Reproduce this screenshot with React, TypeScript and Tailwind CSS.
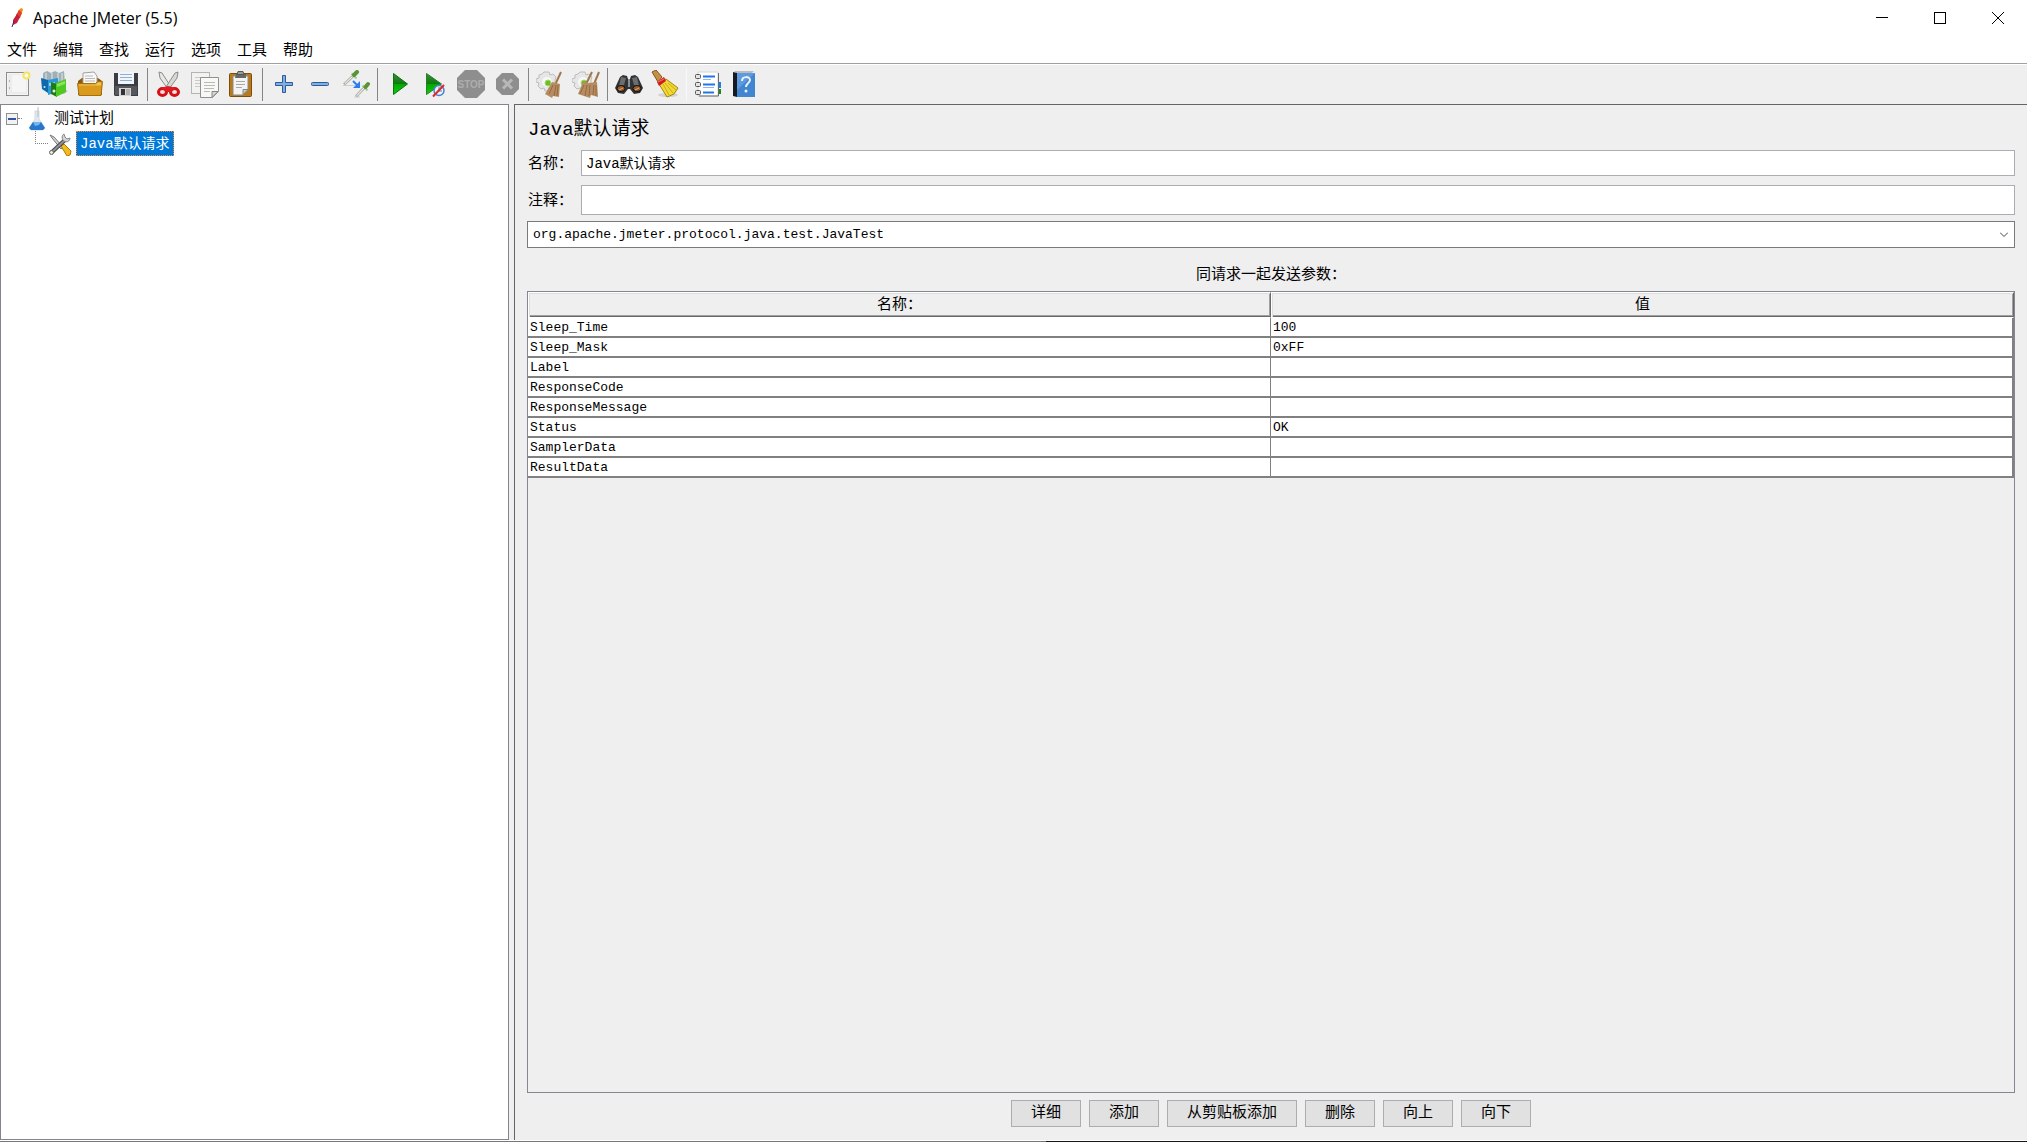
import { useState } from "react";
import type { ReactNode } from "react";

const menus = ["文件", "编辑", "查找", "运行", "选项", "工具", "帮助"];

const params = [
  { name: "Sleep_Time", value: "100" },
  { name: "Sleep_Mask", value: "0xFF" },
  { name: "Label", value: "" },
  { name: "ResponseCode", value: "" },
  { name: "ResponseMessage", value: "" },
  { name: "Status", value: "OK" },
  { name: "SamplerData", value: "" },
  { name: "ResultData", value: "" },
];

const actions = ["详细", "添加", "从剪贴板添加", "删除", "向上", "向下"];

function Icon({ children }: { children: ReactNode }) {
  return (
    <svg viewBox="0 0 28 28" className="h-7 w-7" fill="none" aria-hidden="true">
      {children}
    </svg>
  );
}

function NewIcon() {
  return (
    <Icon>
      <rect x="2.5" y="2.5" width="22" height="23" fill="#f4f4f4" stroke="#8c8f88" />
      <rect x="4" y="4" width="19" height="20" fill="#ececec" />
      <path d="M8 5h14v17H8z" fill="#f5f5f5" />
      <path d="M5.5 10v2M5.5 17v2" stroke="#b5b5b5" />
      <circle cx="22.5" cy="5.5" r="3" fill="#fffbe0" stroke="#f2e36a" strokeWidth="2" />
    </Icon>
  );
}

function TemplatesIcon() {
  return (
    <Icon>
      <path d="M9 24h15l4-3-5-3z" fill="#c4c4c4" />
      <path d="M3 3l4-2 4 2 4-2 4 2 5-2 1 12H3z" fill="#9fb0b6" />
      <path d="M6 3v7M12 3v8M18 3v8M22 3v8" stroke="#dfe8ea" />
      <path d="M1 8l7 2v13l-6-4z" fill="#0d69ad" />
      <path d="M8 10l10-2v14L8 25z" fill="#2a96db" />
      <path d="M9 13l6-1v3l-6 1z" fill="#8fd0f6" />
      <path d="M11 12l6 2v13l-6-3z" fill="#1e7c12" />
      <path d="M16 13l10-4v13l-10 5z" fill="#4fc822" />
      <path d="M17 14l8-3v3l-8 3z" fill="#86e65e" />
      <circle cx="14" cy="21" r="1.5" fill="#dff5d5" />
      <circle cx="4.5" cy="17" r="1" fill="#cfe9fa" />
    </Icon>
  );
}

function OpenIcon() {
  return (
    <Icon>
      <path d="M2 11l4-3h16l4 3v14H2z" fill="#8d5a08" />
      <path d="M7 3l11-1 3 4v10H7z" fill="#f8f8f8" stroke="#a0a0a0" />
      <path d="M9 6h8M9 8.5h10M9 11h10" stroke="#b9b9b9" />
      <path d="M1.5 13.5h18l2-2h5L25 25.5H3z" fill="#d99a1e" stroke="#a8700c" />
      <path d="M3 14.5h17l2-2h3v3H3z" fill="#f0c257" />
    </Icon>
  );
}

function SaveIcon() {
  return (
    <Icon>
      <path d="M2 3h24v23H3l-1-1z" fill="#3b3d42" />
      <path d="M3 16h22v9H3z" fill="#55575c" />
      <rect x="6" y="2" width="16" height="12" fill="#f0f5fa" />
      <path d="M8 4.5h12M8 7.5h12M8 10.5h12" stroke="#8fb0d2" />
      <rect x="7" y="18" width="12" height="8" fill="#d5d5d5" />
      <rect x="9" y="19" width="4" height="6" fill="#303238" />
      <path d="M14 19h4v6h-4z" fill="#b0b0b0" />
    </Icon>
  );
}

function CutIcon() {
  return (
    <Icon>
      <path d="M4 2l3 1 9 14-3 2L5 8z" fill="#e8e8e6" stroke="#8a8c86" />
      <path d="M23 2l-3 1-9 14 3 2 8-11z" fill="#d8d9d5" stroke="#8a8c86" />
      <ellipse cx="7.5" cy="22" rx="4" ry="3.5" fill="#f3dede" stroke="#d40f16" strokeWidth="3" />
      <ellipse cx="19.5" cy="22" rx="4" ry="3.5" fill="#f3dede" stroke="#d40f16" strokeWidth="3" />
      <path d="M6 18l7-2 8 2-5 4h-5z" fill="#dc1b22" />
    </Icon>
  );
}

function CopyIcon() {
  return (
    <Icon>
      <rect x=".5" y="2.5" width="18" height="21" fill="#f2f2f1" stroke="#b4b5b1" />
      <path d="M4 7.5h11M4 10.5h6M4 13.5h5M4 16.5h5" stroke="#cacaca" />
      <path d="M9.5 7.5h18v14l-6 6h-12z" fill="#f8f8f7" stroke="#8f918b" />
      <path d="M13 12.5h11M13 15.5h11M13 18.5h10M13 21.5h6" stroke="#b9bab7" />
      <path d="M27 21.5h-6v6z" fill="#d6d7d3" stroke="#858780" />
    </Icon>
  );
}

function PasteIcon() {
  return (
    <Icon>
      <rect x="2.5" y="3.5" width="22" height="23" rx="1" fill="#b9791d" stroke="#7d4c08" />
      <path d="M6 6h15v14l-5 5H6z" fill="#f4f4f3" stroke="#8b8d87" />
      <path d="M9 4h10v4H8z" fill="#66686a" />
      <path d="M11 1.5h5l1 3h-7z" fill="#9a9c98" stroke="#55574f" />
      <path d="M9 11.5h9M9 14.5h9M9 17.5h6" stroke="#a9aaa7" />
      <path d="M21 19.5h-5v5z" fill="#cccdc9" stroke="#85877f" />
    </Icon>
  );
}

function PlusIcon() {
  return (
    <Icon>
      <path
        d="M12.500 5.500h3v7h7v3h-7v7h-3v-7h-7v-3h7z"
        fill="#84aedb"
        stroke="#2b5c9b"
      />
    </Icon>
  );
}

function MinusIcon() {
  return (
    <Icon>
      <rect x="5.5" y="12.5" width="17" height="3" rx="1" fill="#84aedb" stroke="#2b5c9b" />
    </Icon>
  );
}

function ToggleIcon() {
  return (
    <Icon>
      <path d="M1 15.5h12M12 27h6" stroke="#cfd1cb" />
      <path d="M2 14.5L11 6" stroke="#b4b7ae" strokeWidth="3" />
      <path d="M3 13.5L11 6" stroke="#fbfbf8" />
      <path d="M9.500 3.500l5 5" stroke="#a9c79a" strokeWidth="2" />
      <path d="M12 5l3-3" stroke="#5a9439" strokeWidth="4" strokeLinecap="round" />
      <path d="M14 26.500l8-8.500" stroke="#b4b7ae" strokeWidth="3" />
      <path d="M15 25.500l7-7.500" stroke="#fbfbf8" />
      <path d="M20.500 15.500l5 5" stroke="#a9c79a" strokeWidth="2" />
      <path d="M23.500 17l2.500-3" stroke="#5a9439" strokeWidth="4" strokeLinecap="round" />
      <path d="M11 11l4 4" stroke="#2c7df0" strokeWidth="2" />
      <path d="M18 11v7h-7z" fill="#2c7df0" />
    </Icon>
  );
}

function StartIcon() {
  return (
    <Icon>
      <defs>
        <linearGradient id="play" x1="0" y1="0" x2="0" y2="1">
          <stop offset="0" stopColor="#3a8f3a" />
          <stop offset=".5" stopColor="#0b7a0b" />
          <stop offset=".52" stopColor="#04a804" />
          <stop offset="1" stopColor="#0ad10a" />
        </linearGradient>
      </defs>
      <path d="M8.5 3.5L22.5 14 8.5 24.5z" fill="url(#play)" stroke="#117011" />
    </Icon>
  );
}

function StartNoPauseIcon() {
  return (
    <Icon>
      <path d="M5.5 3.5L20.5 14 5.5 24.5z" fill="url(#play)" stroke="#2a7d2a" />
      <circle cx="18" cy="20.5" r="5" fill="#eaf1fb" stroke="#4a84c6" strokeWidth="1.5" />
      <path d="M18 17v4h3" stroke="#4a84c6" />
      <path d="M12 26.5L23 15" stroke="#e0262b" strokeWidth="2" />
    </Icon>
  );
}

function StopIcon() {
  return (
    <Icon>
      <path d="M8 0h12l8 8v12l-8 8H8l-8-8V8z" fill="#8e8e8e" />
      <text
        x="14"
        y="18"
        textAnchor="middle"
        fill="#adadad"
        className="font-['Liberation_Sans',sans-serif] text-[10px] font-bold"
      >
        STOP
      </text>
    </Icon>
  );
}

function ShutdownIcon() {
  return (
    <Icon>
      <path d="M9 3h11l6 6v10l-6 6H9l-6-6V9z" fill="#8e8e8e" />
      <path d="M10 9.500l9 9M19 9.500l-9 9" stroke="#b8b8b8" strokeWidth="3" />
    </Icon>
  );
}

function Gear() {
  return (
    <g>
      <path
        d="M8 2h5l1 3 3-1 3 3-1 3v7l-3 3-3-1-1 2H9l-1-3-3 1-3-3 1-3-3-1V9l3-1V5l3-1z"
        fill="#e6e6e6"
        stroke="#bdbdbd"
      />
      <circle cx="11" cy="12" r="5" fill="#f7f7f7" />
      <circle cx="12" cy="13" r="3" fill="#6cc01e" stroke="#a5d777" />
    </g>
  );
}

function ClearIcon() {
  return (
    <Icon>
      <Gear />
      <path d="M25 2l-6 13" stroke="#a3764a" strokeWidth="2" />
      <path d="M16 12l8 2-1 13-6-1-1 2-7-4z" fill="#b68d62" />
      <path d="M17 15l-4 9M20 15l-2 11M22 15l-1 11" stroke="#94693c" />
    </Icon>
  );
}

function ClearAllIcon() {
  return (
    <Icon>
      <Gear />
      <path d="M20 2l-6 12M27 2l-5 12" stroke="#a3764a" strokeWidth="2" />
      <path d="M11 12l6 1 8-1 1 15-7-2-1 3-12-4z" fill="#b68d62" />
      <path d="M12 15l-4 9M15 15l-2 11M18 15l-1 11M22 15l-1 10M24 15v11" stroke="#94693c" />
    </Icon>
  );
}

function SearchIcon() {
  return (
    <Icon>
      <path d="M5 7l3-2 4 1 1 3h2l1-3 4-1 3 2 5 11-3 5-6 1-4-5h-2l-4 5-6-1-3-5z" fill="#303234" />
      <path d="M6 7l5 1-2 7-5 1zM22 7l-5 1 2 7 5 1z" fill="#6b6e70" />
      <path d="M13 9h2v8h-2z" fill="#8c8f90" />
      <ellipse cx="6" cy="18.5" rx="4" ry="3" fill="#9b5a29" stroke="#111" />
      <ellipse cx="22" cy="18.5" rx="4" ry="3" fill="#9b5a29" stroke="#111" />
      <path d="M4 20l4-2M20 20l4-2" stroke="#e1a878" />
    </Icon>
  );
}

function BroomIcon() {
  return (
    <Icon>
      <ellipse cx="17" cy="25" rx="10" ry="2" fill="#d3d3d3" />
      <path d="M1 2l4-2 6 7-4 5z" fill="#c58f45" stroke="#84581c" />
      <path d="M11 11l4-2 12 9-4 6-7 3-8-13z" fill="#f0d936" stroke="#a38608" />
      <path d="M12 14l6 11M14 13l8 10M17 13l8 7" stroke="#c9ab17" />
      <path d="M6 12l7-5 2 4-7 5z" fill="#d4191f" />
      <path d="M7 12l6-3" stroke="#f27a7a" />
    </Icon>
  );
}

function ListIcon() {
  return (
    <Icon>
      <path d="M23 12h4v6h-4z" fill="#1685e8" />
      <path d="M23 19h4v5h-4z" fill="#15891a" />
      <path d="M4 2h20v24H4z" fill="#fff" stroke="#d4d4d4" />
      <path d="M24.5 3v23H5" stroke="#6a6a6a" />
      <path d="M9 6.5h12M9 14.5h12M9 22.5h11" stroke="#2574ec" strokeWidth="2" />
      <path d="M9 9.5h8M9 17.5h11" stroke="#8bb5f4" />
      <rect x="1.5" y="4.5" width="5" height="4" rx="1" fill="#e4e4e4" stroke="#555" />
      <rect x="1.5" y="12.5" width="5" height="4" rx="1" fill="#e4e4e4" stroke="#555" />
      <rect x="1.5" y="20.5" width="5" height="4" rx="1" fill="#e4e4e4" stroke="#555" />
    </Icon>
  );
}

function HelpIcon() {
  return (
    <Icon>
      <path d="M4 1h20l-2 2H6z" fill="#b9bcc0" />
      <path d="M3 2l4 1v24l-4-1z" fill="#151a20" />
      <path d="M7 3h18v24H7z" fill="#4285d1" />
      <path d="M7 3h18L7 20z" fill="#5e9ade" />
      <path d="M12 11c0-5 8-5 8-1 0 3-4 3-4 7" stroke="#e9f2fc" strokeWidth="2" />
      <circle cx="16" cy="21" r="1.5" fill="#e9f2fc" />
    </Icon>
  );
}

const toolbar = [
  [
    { label: "新建", icon: <NewIcon /> },
    { label: "模板", icon: <TemplatesIcon /> },
    { label: "打开", icon: <OpenIcon /> },
    { label: "保存", icon: <SaveIcon /> },
  ],
  [
    { label: "剪切", icon: <CutIcon /> },
    { label: "复制", icon: <CopyIcon /> },
    { label: "粘贴", icon: <PasteIcon /> },
  ],
  [
    { label: "展开", icon: <PlusIcon /> },
    { label: "收起", icon: <MinusIcon /> },
    { label: "切换", icon: <ToggleIcon /> },
  ],
  [
    { label: "启动", icon: <StartIcon /> },
    { label: "不停顿开始", icon: <StartNoPauseIcon /> },
    { label: "停止", icon: <StopIcon /> },
    { label: "关闭", icon: <ShutdownIcon /> },
  ],
  [
    { label: "清除", icon: <ClearIcon /> },
    { label: "清除全部", icon: <ClearAllIcon /> },
  ],
  [
    { label: "搜索", icon: <SearchIcon /> },
    { label: "重置搜索", icon: <BroomIcon /> },
  ],
  [
    { label: "函数助手", icon: <ListIcon /> },
    { label: "帮助", icon: <HelpIcon /> },
  ],
];

function TitleBar() {
  return (
    <header className="flex h-[35px] items-center bg-white pl-[10px]">
      <svg viewBox="0 0 14 20" className="h-5 w-[14px]" fill="none" aria-hidden="true">
        <path d="M8 3l3-3 2 1-1 4-3 2z" fill="#f08a1d" />
        <path d="M6 7l3-5 3 3-2 5-4 1z" fill="#e0402a" />
        <path d="M3 12l4-6 3 3-3 6-4 2z" fill="#c3203c" />
        <path d="M4 13l-2 6" stroke="#4b2467" />
      </svg>
      <h1 className="ml-[9px] flex-1 font-['Open_Sans',sans-serif] text-[16px] leading-5">
        Apache JMeter (5.5)
      </h1>
      <div className="flex h-full">
        <button aria-label="最小化" className="flex w-[58px] items-center justify-center">
          <svg viewBox="0 0 12 12" className="h-3 w-3" stroke="#000">
            <path d="M0 5.5h12" />
          </svg>
        </button>
        <button aria-label="最大化" className="flex w-[58px] items-center justify-center">
          <svg viewBox="0 0 12 12" className="h-3 w-3" stroke="#000" fill="none">
            <rect x=".5" y=".5" width="11" height="11" />
          </svg>
        </button>
        <button aria-label="关闭窗口" className="flex w-[58px] items-center justify-center">
          <svg viewBox="0 0 12 12" className="h-3 w-3" stroke="#000">
            <path d="M0 0l12 12M12 0L0 12" />
          </svg>
        </button>
      </div>
    </header>
  );
}

function Toolbar() {
  return (
    <div className="flex h-[41px] items-center border-t border-[#a0a0a0] bg-[#efefef] shadow-[inset_0_1px_0_#fff]">
      {toolbar.map((group, i) => (
        <div key={i} className="flex items-center">
          {i > 0 && (
            <div className="flex w-[7px] justify-center">
              <div
                className={
                  i === toolbar.length - 1 ? "h-[33px] w-px bg-[#f8f8f8]" : "h-[33px] w-px bg-[#858585]"
                }
              />
            </div>
          )}
          {group.map((item) => (
            <button
              key={item.label}
              aria-label={item.label}
              className="flex h-9 w-9 items-center justify-center"
            >
              {item.icon}
            </button>
          ))}
        </div>
      ))}
    </div>
  );
}

function PlanTree() {
  return (
    <aside className="w-[509px] shrink-0 border border-[#82858f] bg-white pt-px">
      {/* Nodo raíz */}
      <div className="flex h-[25px] items-center pl-[5px]">
        <button
          aria-label="收起节点"
          className="flex h-3 w-3 items-center justify-center border border-[#919191] bg-[#f2f2f2]"
        >
          <span className="h-[2px] w-2 bg-[#3353a5]" />
        </button>
        <span className="w-1 border-t border-dotted border-[#808080]" />
        <svg viewBox="0 0 18 24" className="ml-[6px] h-6 w-[18px]" aria-hidden="true">
          <path d="M7 4h4v8l6 9-2 2H3l-2-2 6-9z" fill="#dfe6ee" stroke="#d3dae2" />
          <path d="M5 15h8l4 6-2 2H3l-2-2z" fill="#2777cd" />
          <path d="M5 15h8l-2 3-4 1z" fill="#78b5ec" />
          <path d="M10 0v10" stroke="#b8bec4" />
        </svg>
        <span className="ml-[8px] pt-[3px] text-[15px] leading-5">测试计划</span>
      </div>
      <div className="flex h-[25px] items-center pl-[34px]">
        <span className="mb-[12px] h-[13px] w-[13px] border-b border-l border-dotted border-[#808080]" />
        <svg viewBox="0 0 24 24" className="h-6 w-6" fill="none" aria-hidden="true">
          <path d="M2 3l4 2 9 10-2 2L4 6z" fill="#d5d5d5" stroke="#777" />
          <path d="M13 14l3-2 7 7-1 4-3 1z" fill="#f2bb1b" stroke="#b07b08" />
          <path d="M3 21L18 7" stroke="#44474a" strokeWidth="4" />
          <path d="M3 21L18 7" stroke="#8e9294" strokeWidth="2" />
          <path d="M16 2c-2 1-3 5 0 7s6 0 6-3l-3 1-2-2z" fill="#d2d2d2" stroke="#888" />
          <circle cx="3.5" cy="20.5" r="2" fill="#e8e8e8" stroke="#666" />
        </svg>
        <span className="ml-[4px] border border-dotted border-[#ff8728] bg-[#0078d7] px-[3px] pt-[2px] text-[14px] leading-[21px] text-white">
          Java默认请求
        </span>
      </div>
    </aside>
  );
}

function ParamTable() {
  return (
    <div className="min-h-0 flex-1 border border-[#828790]">
      <table className="w-full table-fixed border-separate border-spacing-0 bg-white">
        <thead>
          <tr>
            {["名称：", "值"].map((title) => (
              <th
                key={title}
                scope="col"
                className="h-[26px] border-y border-l border-r border-t-white border-b-white border-l-white border-r-[#696969] bg-[#efefef] p-0 pt-[2px] text-[15px] leading-5 font-normal shadow-[inset_1px_1px_0_#dedede,inset_0_-1px_0_#696969,inset_-1px_-2px_0_#a0a0a0]"
              >
                {title}
              </th>
            ))}
          </tr>
        </thead>
        <tbody>
          {params.map((param) => (
            <tr key={param.name}>
              <td className="h-5 border-r border-b-2 border-[#808080] p-0 pt-[2px] pl-[2px] text-[13px] leading-4">
                {param.name}
              </td>
              <td className="h-5 border-r-2 border-b-2 border-[#808080] p-0 pt-[2px] pl-[2px] text-[13px] leading-4">
                {param.value}
              </td>
            </tr>
          ))}
        </tbody>
      </table>
    </div>
  );
}

export default function App() {
  const [name, setName] = useState("Java默认请求");
  const [comment, setComment] = useState("");

  return (
    <div className="flex h-screen flex-col bg-[#efefef] font-['Liberation_Mono','Noto_Sans_CJK_SC',monospace] text-black">
      <TitleBar />
      <nav className="flex h-7 items-center gap-4 bg-white pt-[5px] pl-[7px] text-[15px] leading-5">
        {menus.map((menu) => (
          <button key={menu}>{menu}</button>
        ))}
      </nav>
      <Toolbar />

      <div className="flex min-h-0 flex-1 gap-[5px]">
        <PlanTree />

        <main className="flex min-w-0 flex-1 flex-col border-t border-l border-[#646464] px-3 pb-[13px]">
          <h2 className="pt-[5px] pl-px text-[19px] leading-10">Java默认请求</h2>

          <div className="flex items-center">
            <label htmlFor="name" className="w-[54px] pt-1 pl-px text-[15px] leading-5">
              名称：
            </label>
            <input
              id="name"
              value={name}
              onChange={(e) => setName(e.target.value)}
              className="h-[26px] min-w-0 flex-1 border border-[#abadb3] bg-white px-1 pb-[2px] text-[14px] outline-none"
            />
          </div>
          <div className="mt-[9px] flex items-center">
            <label htmlFor="comment" className="w-[54px] pt-1 pl-px text-[15px] leading-5">
              注释：
            </label>
            <input
              id="comment"
              value={comment}
              onChange={(e) => setComment(e.target.value)}
              className="h-[30px] min-w-0 flex-1 border border-[#abadb3] bg-white px-1 pb-[2px] text-[14px] outline-none"
            />
          </div>

          <div className="relative mt-[6px]">
            <select
              aria-label="类名称"
              className="block h-[27px] w-full appearance-none border border-[#7a7a7a] bg-white px-[5px] text-[13px] outline-none"
            >
              <option>org.apache.jmeter.protocol.java.test.JavaTest</option>
            </select>
            <svg
              viewBox="0 0 8 5"
              className="pointer-events-none absolute top-[11px] right-[7px] h-[5px] w-2"
              fill="none"
              stroke="#444"
              aria-hidden="true"
            >
              <path d="M0 .5l4 4 4-4" />
            </svg>
          </div>

          <p className="pt-[18px] pb-[5px] text-center text-[15px] leading-5">同请求一起发送参数：</p>
          <ParamTable />

          <div className="mt-[7px] flex justify-center gap-2">
            {actions.map((action) => (
              <button
                key={action}
                className="h-[27px] border border-[#adadad] bg-[#e1e1e1] px-[19px] text-[15px] leading-5"
              >
                {action}
              </button>
            ))}
          </div>
        </main>
      </div>

      <footer className="flex h-[2px] border-t border-white bg-[#15151a]">
        <div className="w-[1046px] bg-[#777]" />
      </footer>
    </div>
  );
}
